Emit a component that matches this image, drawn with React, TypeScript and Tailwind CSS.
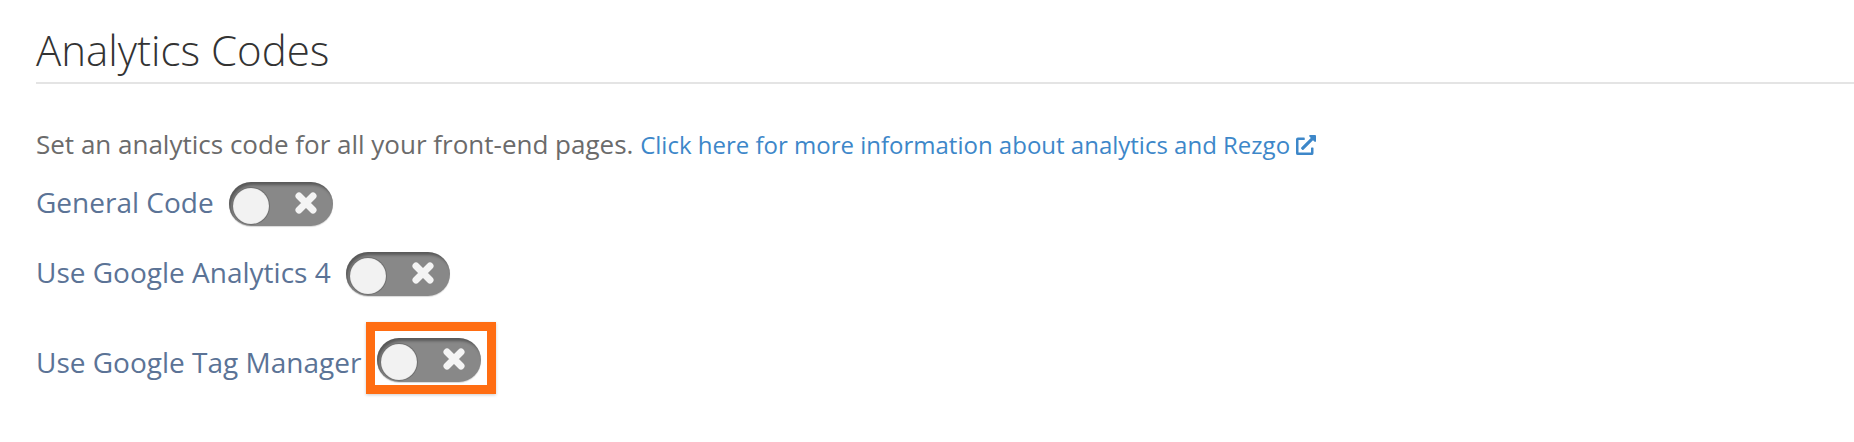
import { FaExternalLinkAlt } from 'react-icons/fa';

interface ToggleProps {
    highlighted?: boolean;
}

function Toggle({ highlighted = false }: ToggleProps) {
    const track = (
        <div className="relative flex items-center justify-between w-[104px] h-[44px] rounded-full bg-[#888888] shadow-[inset_2px_3px_3px_rgba(0,0,0,0.35),0_1px_1px_rgba(0,0,0,0.15)] pl-[4px] pr-[15px]">
            {/* knob */}
            <div className="w-[36px] h-[36px] mt-[4px] rounded-full bg-[#f2f2f2] shadow-[0_0_0_1px_#6f6f6f,inset_0_0_1px_rgba(0,0,0,0.2)]" />
            <svg width="24" height="24" viewBox="0 0 24 24" className="mt-[-2px]">
                <path d="M5 5 L19 19 M19 5 L5 19" stroke="#f4f4f4" strokeWidth="7" strokeLinecap="round" />
            </svg>
        </div>
    );

    if (!highlighted) return track;

    // orange annotation box round the last toggle
    return (
        <div className="border-[9px] border-[#ff6d12] bg-white pt-[7px] pb-[3px] pl-[2px] pr-[6px] shadow-[0_1px_3px_rgba(0,0,0,0.2)]">
            {track}
        </div>
    );
}

const rows = [
    { label: 'General Code', highlighted: false },
    { label: 'Use Google Analytics 4', highlighted: false },
    { label: 'Use Google Tag Manager', highlighted: true },
];

export default function App() {
    return (
        <div className="w-[1854px] h-[442px] bg-white pl-[36px] font-['Open_Sans',sans-serif] overflow-hidden">
            <h1 className="pt-[22px] text-[42px] leading-[56px] font-light text-[#333333]">Analytics Codes</h1>
            <div className="mt-[4px] h-[2px] bg-[#e4e4e4]" />

            <p className="mt-[44px] text-[26px] leading-[32px] text-[#6b6b6b]">
                Set an analytics code for all your front-end pages.{' '}
                <a href="#" className="text-[24px] text-[#3d87c9]">
                    Click here for more information about analytics and Rezgo
                    <FaExternalLinkAlt className="inline-block ml-[6px] mb-[5px] w-[20px] h-[20px]" />
                </a>
            </p>

            <div className="mt-[21px] flex flex-col gap-[26px]">
                {rows.map((row) => (
                    <div key={row.label} className="flex items-center">
                        <span
                            className={`text-[28px] leading-[36px] text-[#5b7396] ${
                                row.highlighted ? 'mt-[8px]' : 'mb-[4px]'
                            }`}
                        >
                            {row.label}
                        </span>
                        <div className={row.highlighted ? 'ml-[5px]' : 'ml-[15px]'}>
                            <Toggle highlighted={row.highlighted} />
                        </div>
                    </div>
                ))}
            </div>
        </div>
    );
}
